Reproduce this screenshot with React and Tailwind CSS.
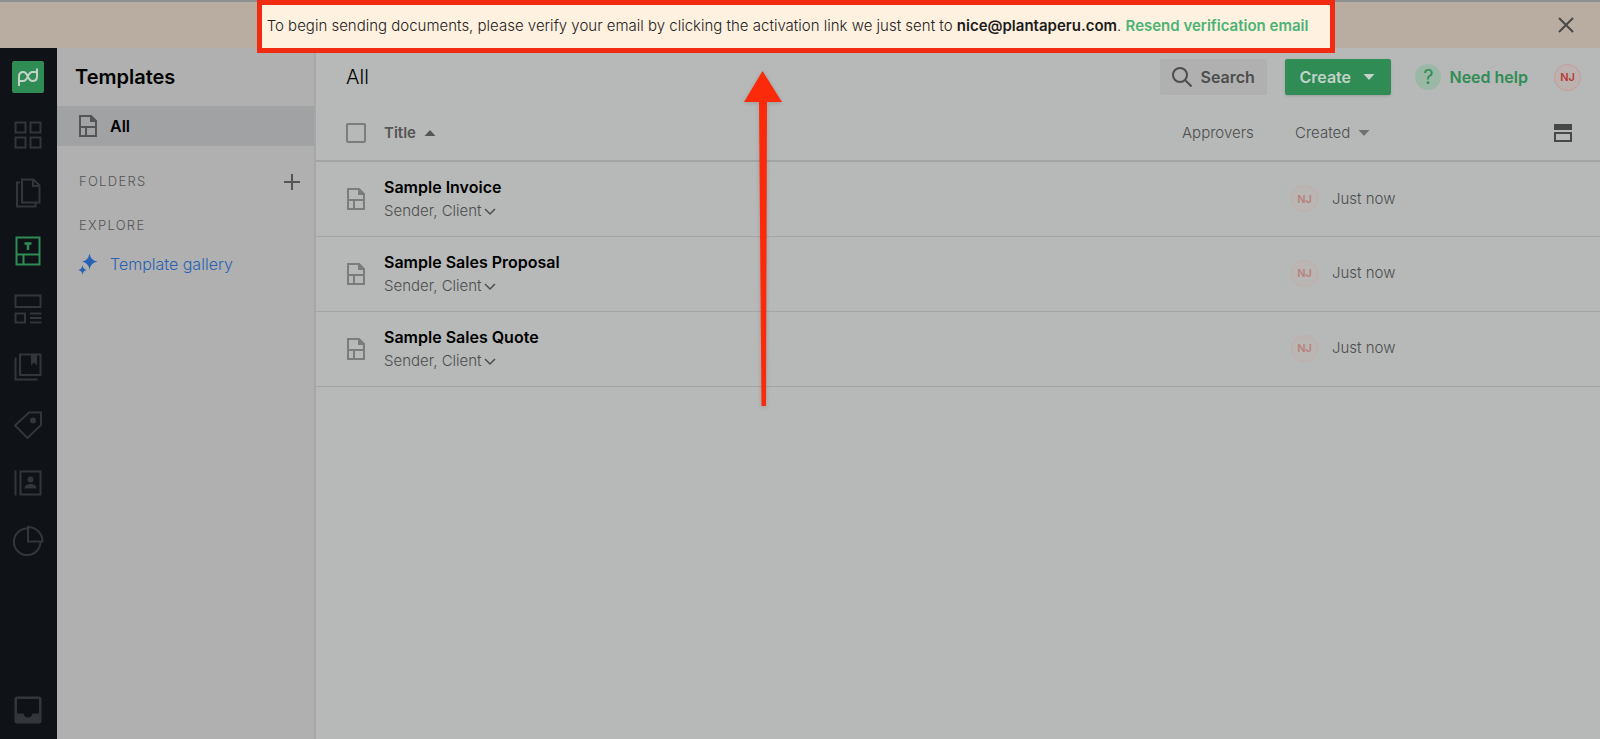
import { useState } from "react";

const templates = [
  { id: 1, title: "Sample Invoice", roles: "Sender, Client", created: "Just now" },
  { id: 2, title: "Sample Sales Proposal", roles: "Sender, Client", created: "Just now" },
  { id: 3, title: "Sample Sales Quote", roles: "Sender, Client", created: "Just now" },
];

const DashboardIcon = () => (
  <svg className="w-7 h-7" viewBox="0 0 28 28" fill="none" stroke="currentColor" strokeWidth="2">
    <path d="M1.5 1.5h10v10h-10zM16.5 1.5h10v10h-10zM1.5 16.5h10v10h-10zM16.5 16.5h10v10h-10z" />
  </svg>
);

const DocumentsIcon = () => (
  <svg className="w-7 h-8" viewBox="0 0 28 32" fill="none" stroke="currentColor" strokeWidth="2">
    <path d="M8 2.5h11.5l6 6V25.5H8z" />
    <path d="M19 2.5v6.5h6.5" />
    <path d="M6 5.5H3V29.5h18.5v-4" />
  </svg>
);

const TemplatesIcon = () => (
  <svg className="w-7 h-8" viewBox="0 0 28 32" fill="none" stroke="currentColor" strokeWidth="2">
    <path d="M2.5 2.5h23v27h-23zM2.5 19.5h23M9.5 19.5v10" />
    <path d="M10.5 8.5h7M14 8.5v6.5" strokeWidth="2.5" />
  </svg>
);

const FormsIcon = () => (
  <svg className="w-7 h-8" viewBox="0 0 28 32" fill="none" stroke="currentColor" strokeWidth="2">
    <path d="M1.5 2.5h25v11.5h-25zM1.5 20.5h9.5v9h-9.5z" />
    <path d="M16 20.5h11.5M16 25h11.5M16 29.5h11.5" />
  </svg>
);

const LibraryIcon = () => (
  <svg className="w-7 h-7" viewBox="0 0 28 28" fill="none" stroke="currentColor" strokeWidth="2">
    <path d="M6 1.5h20.5v20.5H6zM1.5 4.5v22h22" />
    <path d="M17 2h6v10.5l-3-3-3 3z" fill="currentColor" stroke="none" />
  </svg>
);

const TagIcon = () => (
  <svg className="w-7 h-7" viewBox="0 0 28 28" fill="none" stroke="currentColor" strokeWidth="2">
    <path d="M15 1.5h12v12.5L13.5 27 1 14.5z" />
    <circle cx="19" cy="9.5" r="3" fill="currentColor" stroke="none" />
  </svg>
);

const ContactsIcon = () => (
  <svg className="w-7 h-7" viewBox="0 0 28 28" fill="none" stroke="currentColor" strokeWidth="2">
    <path d="M6.5 2.5h20v23h-20zM1.5 1.5v25" />
    <circle cx="16.5" cy="10.5" r="3" fill="currentColor" stroke="none" />
    <path d="M10.5 19.5c0-3 2.5-4.5 6-4.5s6 1.5 6 4.5z" fill="currentColor" stroke="none" />
  </svg>
);

const ReportsIcon = () => (
  <svg className="w-8 h-8" viewBox="0 0 32 32" fill="none" stroke="currentColor" strokeWidth="2">
    <path d="M15.5 3.5A13.3 13.3 0 1 0 28.5 16.5" />
    <path d="M16 2v14.5h14.5A14.5 14.5 0 0 0 16 2z" />
  </svg>
);

const InboxIcon = () => (
  <svg className="w-7 h-7" viewBox="0 0 28 28" fill="currentColor">
    <path
      fillRule="evenodd"
      d="M3 .5h22a2.5 2.5 0 0 1 2.5 2.5v22a2.5 2.5 0 0 1-2.5 2.5H3A2.5 2.5 0 0 1 .5 25V3A2.5 2.5 0 0 1 3 .5zM3 3v14.5h6.5c.5 2.5 2 4 4.5 4s4-1.5 4.5-4H25V3z"
    />
  </svg>
);

const TemplateIcon = () => (
  <svg className="w-5 h-6" viewBox="0 0 20 24" fill="none" stroke="currentColor" strokeWidth="2">
    <path d="M2 2h11l5 5v15H2zM2 13h16M8 13v9" />
    <path d="M12 1.5v6.5h6.5z" fill="currentColor" stroke="none" />
  </svg>
);

const Caret = ({ up }) => (
  <svg className="w-3 h-2" viewBox="0 0 12 8" fill="currentColor">
    {up ? <path d="M.5 7L6 1l5.5 6z" /> : <path d="M.5 1h11L6 7z" />}
  </svg>
);

const navItems = [
  { name: "Dashboard", Icon: DashboardIcon },
  { name: "Documents", Icon: DocumentsIcon },
  { name: "Templates", Icon: TemplatesIcon, active: true },
  { name: "Forms", Icon: FormsIcon },
  { name: "Content library", Icon: LibraryIcon },
  { name: "Catalog", Icon: TagIcon },
  { name: "Contacts", Icon: ContactsIcon },
  { name: "Reports", Icon: ReportsIcon },
];

function Banner() {
  return (
    <div className="h-12 flex items-start pr-2 bg-[#b8ada0] border-t-2 border-[#8f9190]">
      <div className="flex-1" />
      {/* Spotlight around the message, hangs over the header below */}
      <div className="relative z-20 -mt-0.5 h-[53px] shrink-0 flex items-center pl-[5px] pr-[22px] border-5 border-[#f02b11] bg-[#fff1df] text-[15px] font-light text-[#222] whitespace-nowrap">
        <p>
          To begin sending documents, please verify your email by clicking the activation link we just sent to{" "}
          <strong className="font-semibold text-[#1c1c1c]">nice@plantaperu.com</strong>.{" "}
          <a href="#resend" className="font-semibold text-[#4bb375]">
            Resend verification email
          </a>
        </p>
      </div>
      <div className="flex-1 h-full flex items-center justify-end">
        <button aria-label="Close" className="mr-3 p-1 text-[#484848]">
          <svg className="w-5 h-5" viewBox="0 0 20 20" fill="none" stroke="currentColor" strokeWidth="2">
            <path d="M3 3l14 14M17 3L3 17" />
          </svg>
        </button>
      </div>
    </div>
  );
}

function Rail() {
  return (
    <nav className="w-[57px] shrink-0 flex flex-col pr-0.5 bg-[#0f1217] text-[#33363b]">
      <a href="#home" aria-label="Home" className="h-[58px] flex items-center justify-center">
        <svg className="w-8 h-8" viewBox="0 0 32 32" fill="none">
          <rect width="32" height="32" rx="2" fill="#2f8c54" />
          <path
            d="M7 25V15.5C7 12.5 8.8 11 11.3 11C16.5 11 15 20 20.5 20C23 20 25 18.5 25 15.5V7.5M7 20H11.3C16.5 20 15 11 20.5 11H25"
            stroke="#c3d3c9"
            strokeWidth="2"
          />
        </svg>
      </a>
      {navItems.map(({ name, Icon, active }) => (
        <a
          key={name}
          href="#nav"
          aria-label={name}
          className={`h-[58px] flex items-center justify-center ${active ? "text-[#2f8c54]" : ""}`}
        >
          <Icon />
        </a>
      ))}
      <a href="#inbox" aria-label="Inbox" className="mt-auto h-[58px] flex items-center justify-center">
        <InboxIcon />
      </a>
    </nav>
  );
}

function Sidebar() {
  return (
    <aside className="w-[259px] shrink-0 bg-[#b0b0b0] border-r-2 border-[#a6a7a7]">
      <h1 className="h-[58px] flex items-center pl-[18px] text-xl font-semibold text-black">Templates</h1>
      <a href="#all" className="h-10 flex items-center gap-3 pl-[21px] bg-[#a1a2a4]">
        <span className="text-[#555]">
          <TemplateIcon />
        </span>
        <span className="text-base font-semibold text-black">All</span>
      </a>
      <div className="mt-4 h-10 flex items-center justify-between pl-[22px] pr-3 text-[#555]">
        <h2 className="text-[13px] font-light tracking-widest">FOLDERS</h2>
        <button aria-label="Add folder">
          <svg className="w-5 h-5" viewBox="0 0 20 20" fill="none" stroke="currentColor" strokeWidth="2">
            <path d="M10 2v16M2 10h16" />
          </svg>
        </button>
      </div>
      <div className="mt-1 h-10 flex items-center pl-[22px] text-[#555]">
        <h2 className="text-[13px] font-light tracking-widest">EXPLORE</h2>
      </div>
      <a href="#gallery" className="h-9 flex items-center gap-3 pl-[21px] text-base font-light text-[#2762b4]">
        <svg className="w-5 h-6" viewBox="0 0 20 24" fill="currentColor">
          <path d="M11.5 1Q12.5 9 19.5 9.5Q12.5 10.5 11.5 18Q10.5 10.5 4 9.5Q10.5 9 11.5 1z" />
          <path d="M4.5 13Q5 17.5 9 18Q5 18.5 4.5 23Q4 18.5 0 18Q4 17.5 4.5 13z" />
        </svg>
        Template gallery
      </a>
    </aside>
  );
}

function Header() {
  return (
    <header className="h-[58px] flex items-center pl-[30px] pr-[19px]">
      <h2 className="text-xl font-light text-black">All</h2>
      <button className="ml-auto w-[107px] h-9 flex items-center gap-2 pl-3 rounded-xs bg-[#b0b0b0] text-base font-semibold text-[#4d4d4d]">
        <svg className="w-5 h-5" viewBox="0 0 20 20" fill="none" stroke="currentColor" strokeWidth="2">
          <circle cx="8" cy="8" r="7" />
          <path d="M13 13l6.5 6.5" />
        </svg>
        Search
      </button>
      <button className="ml-[18px] w-[106px] h-9 flex items-center gap-3 pl-3.5 rounded-xs bg-[#2f8c54] shadow text-base font-semibold text-[#c3d3c9]">
        Create
        <Caret />
      </button>
      <a href="#help" className="ml-6 flex items-center gap-2 text-base font-semibold text-[#2f8c54]">
        <span className="w-[26px] h-[26px] rounded-full bg-[#9bb8a7] flex items-center justify-center text-xl font-normal">
          ?
        </span>
        Need help
      </a>
      <button className="ml-[26px] w-[27px] h-[27px] rounded-full border border-[#c79a97] bg-[#bcb2b0] text-[11px] font-semibold text-[#b83a35]">
        NJ
      </button>
    </header>
  );
}

function TemplateTable() {
  const [checked, setChecked] = useState(false);

  return (
    <table className="w-full table-fixed border-collapse text-left text-[15px] font-light text-[#4b4d4d]">
      <colgroup>
        <col className="w-[68px]" />
        <col />
        <col className="w-[109px]" />
        <col className="w-[263px]" />
        <col className="w-[46px]" />
      </colgroup>
      <thead>
        <tr className="h-[55px] border-b-2 border-[#a3a5a4]">
          <th className="pl-[30px]">
            <input
              type="checkbox"
              aria-label="Select all"
              checked={checked}
              onChange={() => setChecked(!checked)}
              className="block w-5 h-5 appearance-none border-2 border-[#7b7c7c] rounded-xs checked:bg-[#7b7c7c]"
            />
          </th>
          <th>
            <button className="flex items-center gap-2 font-semibold text-[#555]">
              Title
              <Caret up />
            </button>
          </th>
          <th className="font-light">Approvers</th>
          <th className="pl-1 font-light">
            <button className="flex items-center gap-2">
              Created
              <span className="text-[#707272]">
                <Caret />
              </span>
            </button>
          </th>
          <th>
            <button aria-label="Change view" className="block text-[#484848]">
              <svg className="w-[18px] h-[18px]" viewBox="0 0 18 18" fill="none" stroke="currentColor" strokeWidth="2">
                <path d="M0 0h18v6H0z" fill="currentColor" stroke="none" />
                <path d="M1 9h16v8H1z" />
              </svg>
            </button>
          </th>
        </tr>
      </thead>
      <tbody>
        {templates.map((template) => (
          <tr key={template.id} className="h-[75px] border-b border-[#a3a5a4]">
            <td className="pl-[30px] text-[#7b7c7c]">
              <TemplateIcon />
            </td>
            <td>
              <a href="#template" className="block leading-6 text-base font-semibold text-black">
                {template.title}
              </a>
              <button className="flex items-center gap-0.5 leading-6">
                {template.roles}
                <svg className="w-3 h-3" viewBox="0 0 12 12" fill="none" stroke="currentColor" strokeWidth="1.5">
                  <path d="M1 4l5 5 5-5" />
                </svg>
              </button>
            </td>
            <td />
            <td>
              <div className="flex items-center gap-3.5">
                <span className="w-[27px] h-[27px] rounded-full border border-[#c2acab] bg-[#bab6b4] flex items-center justify-center text-[11px] font-semibold text-[#b87f7c]">
                  NJ
                </span>
                {template.created}
              </div>
            </td>
            <td />
          </tr>
        ))}
      </tbody>
    </table>
  );
}

export default function App() {
  return (
    <div className="relative min-h-screen flex flex-col bg-[#b7b9b8] font-['Inter','Liberation_Sans',sans-serif]">
      <Banner />
      <div className="flex-1 flex">
        <Rail />
        <Sidebar />
        <main className="flex-1 min-w-0">
          <Header />
          <TemplateTable />
        </main>
      </div>

      {/* Pointer to the banner */}
      <svg className="absolute left-[744px] top-[71px] w-[38px] h-[336px] drop-shadow-sm" viewBox="0 0 38 336" fill="#fb2a0b">
        <path d="M18.5 0L38 31H23L22 335h-4.5L15 31H0z" />
      </svg>
    </div>
  );
}
